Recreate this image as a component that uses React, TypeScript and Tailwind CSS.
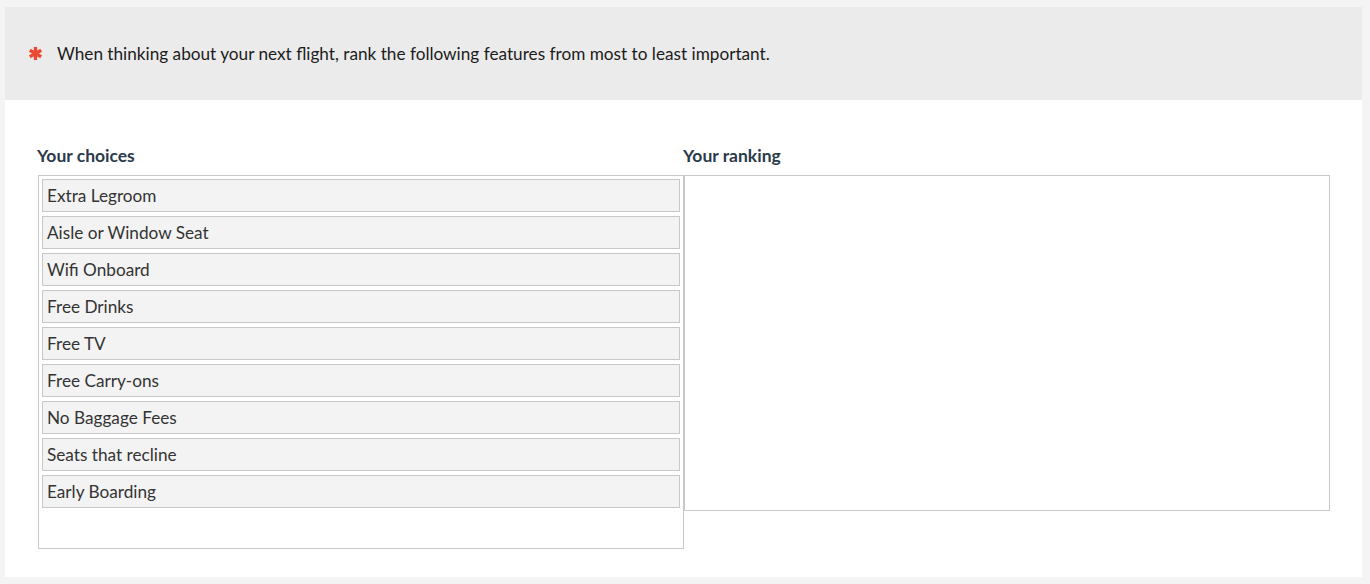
import React from "react";

const choices = [
  "Extra Legroom",
  "Aisle or Window Seat",
  "Wifi Onboard",
  "Free Drinks",
  "Free TV",
  "Free Carry-ons",
  "No Baggage Fees",
  "Seats that recline",
  "Early Boarding",
];

export default function App() {
  return (
    <div
      className="h-[584px] w-[1370px] bg-[#f4f4f4] pt-[7px] pl-[5px] pr-[8px]"
      style={{ fontFamily: "Lato, 'Open Sans', sans-serif" }}
    >
      <div className="h-[570px] bg-white">
        <div className="flex h-[93px] items-center bg-[#ebebeb] pl-[23px]">
          <svg width="15" height="15" viewBox="0 0 16 16" className="mr-[14px]">
            <g stroke="#ea4a31" strokeWidth="3.6" strokeLinecap="butt">
              <line x1="8" y1="1" x2="8" y2="15" />
              <line x1="1.9" y1="4.5" x2="14.1" y2="11.5" />
              <line x1="1.9" y1="11.5" x2="14.1" y2="4.5" />
            </g>
          </svg>
          <span className="text-[17.2px] text-[#1c1c1c]">
            When thinking about your next flight, rank the following features from most to least important.
          </span>
        </div>
        <div className="flex pl-[33px] pt-[46px]">
          <div className="w-[646px]">
            <div className="mb-[9px] h-[20px] text-[17.5px] font-bold leading-[20px] text-[#2b3a4a] -ml-[1px]">
              Your choices
            </div>
            <div className="flex h-[374px] flex-col gap-[4px] border border-[#c9c9c9] p-[3px]">
              {choices.map((c) => (
                <div
                  key={c}
                  className="flex h-[33px] items-center border border-[#c8c8c8] bg-[#f3f3f3] pl-[4px] text-[17.2px] text-[#333]"
                >
                  {c}
                </div>
              ))}
            </div>
          </div>
          <div className="w-[646px]">
            <div className="mb-[9px] h-[20px] text-[17.5px] font-bold leading-[20px] text-[#2b3a4a] -ml-[1px]">
              Your ranking
            </div>
            <div className="h-[336px] border border-[#c9c9c9] bg-white" />
          </div>
        </div>
      </div>
    </div>
  );
}
